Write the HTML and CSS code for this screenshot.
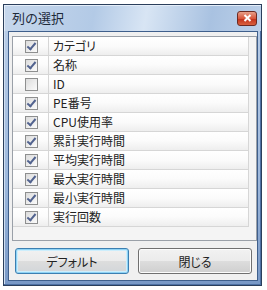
FILE: index.html
```html
<!DOCTYPE html>
<html lang="ja">
<head>
    <meta charset="UTF-8">
    <title>列の選択</title>
    <link rel="stylesheet" href="styles.css">
</head>
<body>
    <div class="window">
        <div class="titlebar">
            <span class="title">列の選択</span>
            <span class="close">
                <svg width="9" height="8" viewBox="0 0 9 8"><path d="M1.5 1 L7.5 7 M7.5 1 L1.5 7" stroke="#fff" stroke-width="2"/></svg>
            </span>
        </div>
        <div class="frame">
            <div class="client">
                <div class="grid">
                    <div class="row"><div class="cell-check"><span class="chk on"></span></div><div class="cell-name">カテゴリ</div></div>
                    <div class="row"><div class="cell-check"><span class="chk on"></span></div><div class="cell-name">名称</div></div>
                    <div class="row"><div class="cell-check"><span class="chk"></span></div><div class="cell-name">ID</div></div>
                    <div class="row"><div class="cell-check"><span class="chk on"></span></div><div class="cell-name">PE番号</div></div>
                    <div class="row"><div class="cell-check"><span class="chk on"></span></div><div class="cell-name">CPU使用率</div></div>
                    <div class="row"><div class="cell-check"><span class="chk on"></span></div><div class="cell-name">累計実行時間</div></div>
                    <div class="row"><div class="cell-check"><span class="chk on"></span></div><div class="cell-name">平均実行時間</div></div>
                    <div class="row"><div class="cell-check"><span class="chk on"></span></div><div class="cell-name">最大実行時間</div></div>
                    <div class="row"><div class="cell-check"><span class="chk on"></span></div><div class="cell-name">最小実行時間</div></div>
                    <div class="row"><div class="cell-check"><span class="chk on"></span></div><div class="cell-name">実行回数</div></div>
                </div>
                <div class="buttons">
                    <button class="btn focused">デフォルト</button>
                    <button class="btn">閉じる</button>
                </div>
            </div>
        </div>
    </div>
</body>
</html>
```

FILE: styles.css
```css
body {
    margin: 0;
    padding: 4px 0 0 3px;
    background: #fff;
    font-family: "Noto Sans CJK JP", "Noto Sans", sans-serif;
    font-size: 12px;
    color: #222;
}

.window {
    width: 257px;
    height: 280px;
    border: 1px solid #2b3f5c;
    display: flex;
    flex-direction: column;
    background: #5f84b8;
}

.titlebar {
    height: 26px;
    display: flex;
    align-items: center;
    justify-content: space-between;
    padding: 0 4px 0 4px;
    background: linear-gradient(100deg, #c6d7ec 0%, #b3cae6 35%, #d8e5f4 55%, #a9c2e1 80%, #bcd0e9 100%);
    box-shadow: inset 1px 1px 0 #e4edf8;
}

.title {
    font-size: 13px;
    color: #1e2a3a;
    padding-left: 4px;
    margin-top: -1px;
}

.close {
    width: 18px;
    height: 13px;
    border: 1px solid #6d2a22;
    border-radius: 3px;
    background: linear-gradient(#e8a08a 0%, #d8563b 50%, #c3331c 55%, #d9613f 100%);
    display: flex;
    align-items: center;
    justify-content: center;
}

.frame {
    flex: 1;
    display: flex;
    padding: 0 3px 4px 4px;
    background: linear-gradient(#b6cbe6 0%, #9db8dc 60%, #7898c6 100%);
    box-shadow: inset -1px -1px 0 #4d70a4, inset 1px 0 0 #d0def0;
}

.client {
    flex: 1;
    border: 1px solid #3f5f8c;
    background: #f0f0f0;
    padding: 4px 0 0 3px;
    display: flex;
    flex-direction: column;
}

.grid {
    height: 203px;
    border: 1px solid #9aa0a8;
    background: #f4f4f4;
}

.row {
    display: flex;
    height: 19px;
    width: 236px;
}

.cell-check,
.cell-name {
    box-sizing: border-box;
    border-right: 1px solid #d6d6d6;
    border-bottom: 1px solid #d6d6d6;
    background: linear-gradient(#ffffff 0%, #fbfbfb 50%, #eeeeee 100%);
}

.cell-check {
    width: 36px;
    display: flex;
    align-items: center;
    padding-left: 12px;
}

.cell-name {
    flex: 1;
    padding-left: 4px;
    line-height: 18px;
    font-feature-settings: "palt";
    white-space: nowrap;
}

.chk {
    width: 13px;
    height: 13px;
    box-sizing: border-box;
    border: 1px solid #8e8f8f;
    background: linear-gradient(135deg, #dcdcdc, #fbfbfb);
    position: relative;
}

.chk.on::after {
    content: "";
    position: absolute;
    left: 3px;
    top: 0px;
    width: 3px;
    height: 7px;
    border-right: 2px solid #52638f;
    border-bottom: 2px solid #52638f;
    transform: rotate(40deg);
}

.buttons {
    display: flex;
    gap: 9px;
    padding: 7px 0 0 3px;
}

.btn {
    width: 114px;
    height: 26px;
    font-family: inherit;
    font-size: 12px;
    color: #222;
    border: 1px solid #707070;
    border-radius: 3px;
    background: linear-gradient(#f2f2f2 0%, #ebebeb 50%, #dddddd 51%, #cfcfcf 100%);
    box-shadow: inset 0 0 0 1px #fcfcfc;
    padding: 0;
    font-feature-settings: "palt";
}

.btn.focused {
    border-color: #3c7fb1;
    box-shadow: inset 0 0 0 1px #8fd3f5, inset 0 0 0 2px #cdeefc;
    background: linear-gradient(#f2f2f2 0%, #ebebeb 50%, #dddddd 51%, #d2d6d9 100%);
}
```
